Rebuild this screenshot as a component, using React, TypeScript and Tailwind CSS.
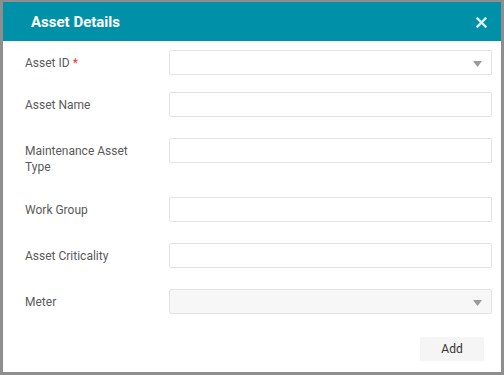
import React from "react";

const fields = [
  { label: "Asset ID", required: true, type: "select", mt: "mt-0" },
  { label: "Asset Name", type: "text", mt: "mt-[17px]" },
  { label: "Maintenance Asset Type", type: "text", mt: "mt-[21px]" },
  { label: "Work Group", type: "text", mt: "mt-[22px]" },
  { label: "Asset Criticality", type: "text", mt: "mt-[21px]" },
  { label: "Meter", type: "select", disabled: true, mt: "mt-[21px]" },
];

const Caret = () => (
  <svg width="9" height="6" viewBox="0 0 9 6" className="absolute right-[9px] top-[10px]">
    <path d="M0 0 H9 L4.5 6 Z" fill="#9a9a9a" />
  </svg>
);

const App = () => {
  return (
    <div
      className="min-h-screen bg-[#8e8e8e] pl-[3px] pt-[2px]"
      style={{ fontFamily: "Roboto, 'Liberation Sans', sans-serif" }}
    >
      <div className="flex h-[370px] w-[498px] flex-col bg-white">
        <div className="flex h-[39px] items-center justify-between bg-[#0090a8] pl-[28px] pr-[14px] pt-[1px]">
          <h2 className="text-[15px] font-bold text-white">Asset Details</h2>
          <svg width="11" height="11" viewBox="0 0 11 11">
            <path d="M1.5 1.5 L9.5 9.5 M9.5 1.5 L1.5 9.5" stroke="#d9eef2" strokeWidth="2.4" strokeLinecap="square" />
          </svg>
        </div>
        <div className="pl-[22px] pr-[9px] pt-[9px]">
          {fields.map((f) => (
            <div key={f.label} className={`flex items-start ${f.mt}`}>
              <label className="w-[144px] pr-[30px] pt-[5px] text-[12px] leading-[16px] text-[#5a5a5a]">
                {f.label}
                {f.required && <span className="ml-[3px] text-[#e53935]">*</span>}
              </label>
              <div
                className={`relative h-[25px] flex-1 rounded-[2px] border border-[#e3e3e3] ${
                  f.disabled ? "bg-[#f7f7f7]" : "bg-white"
                }`}
              >
                {f.type === "select" && <Caret />}
              </div>
            </div>
          ))}
          <div className="mt-[23px] flex justify-end pr-[8px]">
            <button className="h-[24px] w-[64px] bg-[#f5f5f5] text-[12px] text-[#333]">Add</button>
          </div>
        </div>
      </div>
    </div>
  );
};

export default App;
